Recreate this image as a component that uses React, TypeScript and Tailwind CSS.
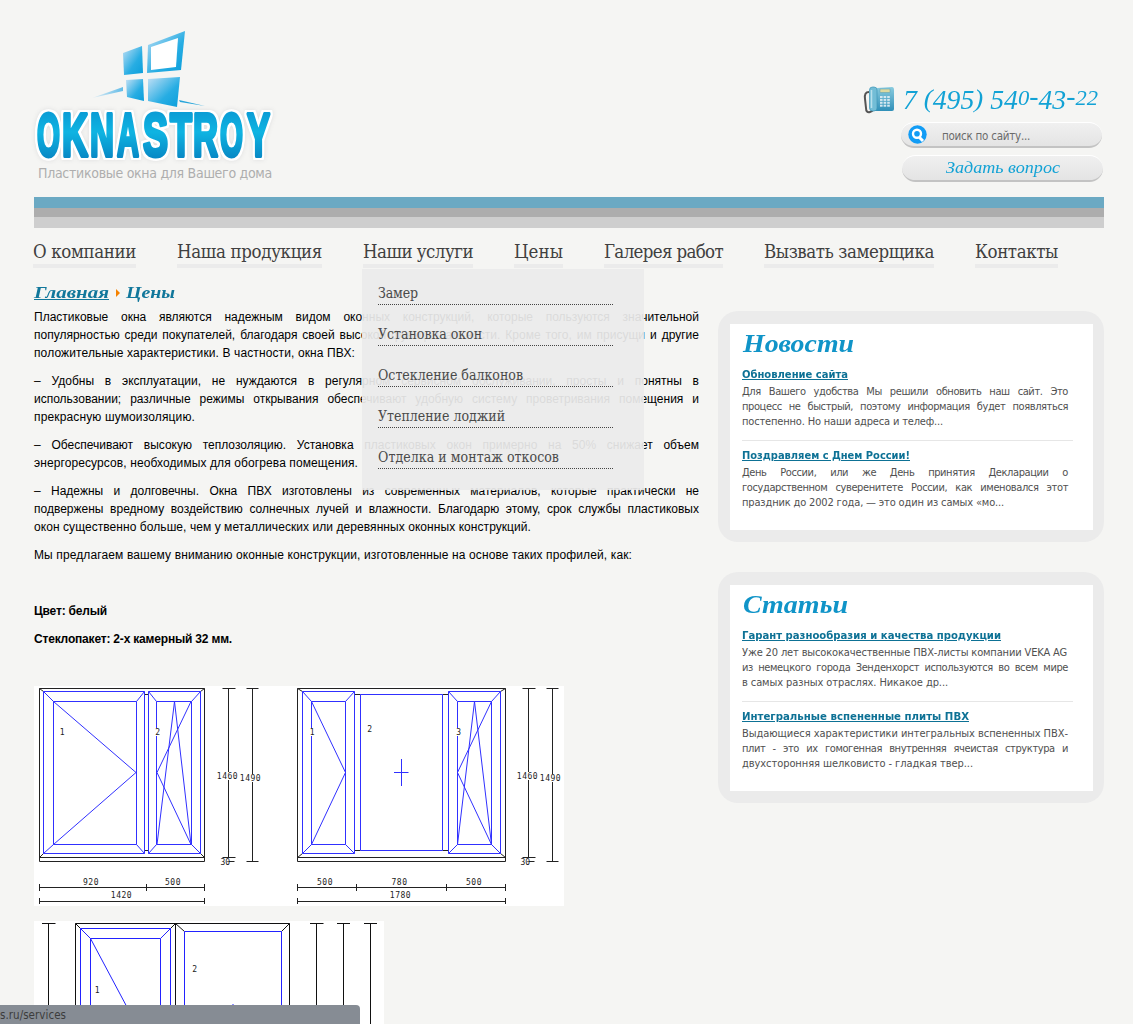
import React, { useLayoutEffect, useRef } from "react";

const SERIF = "font-['DejaVu_Serif_Condensed','DejaVu_Serif',serif]";
const TIMES = "font-['Liberation_Serif',serif]";
const TAHOMA = "font-['DejaVu_Sans_Condensed','DejaVu_Sans',sans-serif]";

/** One line of text whose letter spacing is tuned so that it spans `width` pixels. */
function Fit({ text, width, className = "" }: { text: string; width: number; className?: string }) {
  const ref = useRef<HTMLSpanElement>(null);
  useLayoutEffect(() => {
    const el = ref.current;
    if (!el) return;
    el.style.letterSpacing = "0px";
    const natural = el.getBoundingClientRect().width;
    el.style.letterSpacing = `${(width - natural) / text.length}px`;
  }, [text, width]);
  return (
    <span ref={ref} className={"inline-block whitespace-nowrap " + className}>
      {text}
    </span>
  );
}

/** One line of text whose letters are widened or narrowed to span `width` pixels. */
function Stretch({ children, width, className = "" }: { children: React.ReactNode; width: number; className?: string }) {
  const ref = useRef<HTMLSpanElement>(null);
  useLayoutEffect(() => {
    const el = ref.current;
    if (!el) return;
    el.style.transform = "none";
    el.style.transform = `scaleX(${width / el.getBoundingClientRect().width})`;
  }, [width]);
  return (
    <span className="inline-block" style={{ width }}>
      <span ref={ref} className={"inline-block origin-left whitespace-nowrap " + className}>
        {children}
      </span>
    </span>
  );
}

type Line = { t: string; w?: number };

function Lines({ lines }: { lines: Line[] }) {
  return (
    <>
      {lines.map((l) =>
        l.w ? (
          <span key={l.t} className="block">
            <Fit text={l.t} width={l.w} />
          </span>
        ) : (
          <span key={l.t} className="block whitespace-nowrap text-justify [text-align-last:justify]">
            {l.t}
          </span>
        ),
      )}
    </>
  );
}

const letters: [string, number, number][] = [
  ["O", 37, 23],
  ["K", 62, 26],
  ["N", 90, 24],
  ["A", 117, 22],
  ["S", 143, 25],
  ["T", 170, 22],
  ["R", 193, 25],
  ["O", 220, 23],
  ["Y", 247, 23],
];

function Logo() {
  return (
    <svg width="250" height="138" viewBox="30 26 250 138" className="block">
      <defs>
        <linearGradient id="pane" x1="0" y1="0" x2="1" y2="1">
          <stop offset="0" stopColor="#c3e0f5" />
          <stop offset="0.6" stopColor="#27ade3" />
          <stop offset="1" stopColor="#0a9edb" />
        </linearGradient>
        <linearGradient id="ray" x1="0" y1="0" x2="1" y2="0">
          <stop offset="0" stopColor="#e5eff5" />
          <stop offset="1" stopColor="#62bce8" />
        </linearGradient>
        <linearGradient id="word" gradientUnits="userSpaceOnUse" x1="0" y1="110" x2="0" y2="159">
          <stop offset="0" stopColor="#0a9ad4" />
          <stop offset="0.45" stopColor="#0fb4e2" />
          <stop offset="1" stopColor="#0787c4" />
        </linearGradient>
      </defs>
      <path d="M92 98 L123 87 L123 91 Z" fill="url(#ray)" />
      <path d="M179 100 L205 106 L180 102 Z" fill="#27a5da" />
      <path d="M123 53 L142 46 L143 73 L124 75 Z" fill="url(#pane)" />
      <path d="M126 80 L143 79 L144 101 L127 97 Z" fill="url(#pane)" />
      <path d="M148 79 L180 77 L177 107 L148 101 Z" fill="url(#pane)" />
      <path d="M148 45 L185 31 L181 70 L147 73 Z" fill="url(#pane)" />
      <path d="M151 47 L178 38 L176 67 L151 70 Z" fill="#fff" />
      <g
        className="[filter:drop-shadow(2px_0_0_white)_drop-shadow(-2px_0_0_white)_drop-shadow(0_2px_0_white)_drop-shadow(0_-2px_0_white)_drop-shadow(0_0_2px_#dddddd)]"
        fontFamily="Liberation Sans"
        fontWeight="700"
        fontSize="62"
        strokeLinejoin="round"
        fill="url(#word)"
        stroke="url(#word)"
        strokeWidth="4"
      >
        {letters.map(([c, x, w], i) => (
          <text key={i} x={x} y="156" textLength={w} lengthAdjust="spacingAndGlyphs">
            {c}
          </text>
        ))}
      </g>
    </svg>
  );
}

function Phone() {
  return (
    <svg width="32" height="29" viewBox="863 86 32 29">
      <defs>
        <linearGradient id="ph" x1="0" y1="0" x2="0" y2="1">
          <stop offset="0" stopColor="#8accdf" />
          <stop offset="1" stopColor="#2f8fb8" />
        </linearGradient>
      </defs>
      <path d="M869 92 Q864 92 865 99 L866 108 Q866 113 870 112 Q874 111 873 106" fill="none" stroke="#555" strokeWidth="2" />
      <path d="M877 88 L892 87 Q894 87 894 90 L894 109 Q894 111 892 111 L872 111 L872 103 Z" fill="url(#ph)" />
      <rect x="869.5" y="87" width="7.5" height="24" rx="3" fill="#73bdd6" stroke="#3d97b8" strokeWidth="0.7" />
      <path d="M871.5 90V108" stroke="#b8e0ec" strokeWidth="1.5" />
      <rect x="880" y="89" width="10" height="3.5" fill="#dcd9a0" stroke="#5a9cae" strokeWidth="0.5" />
      <g fill="#d4e8f0">
        {[0, 1, 2, 3].map((r) => [0, 1, 2].map((c) => <rect key={`${r}-${c}`} x={880 + c * 3.6} y={96 + r * 2.9} width="2.6" height="2" />))}
      </g>
    </svg>
  );
}

/** Old-style figures: 0 and 2 sit at x-height, the others hang below the baseline. */
function PhoneNumber() {
  return (
    <Stretch width={195}>
      {"7 (495) 540-43-22".split("").map((c, i) => (
        <span
          key={i}
          className={
            "02".includes(c)
              ? "text-[22px]"
              : "34579".includes(c)
                ? "align-[-4px] text-[27px]"
                : "()".includes(c)
                  ? "align-[-2px] text-[26px]"
                  : "text-[27px]"
          }
        >
          {c}
        </span>
      ))}
    </Stretch>
  );
}

const pill =
  "flex items-center rounded-full bg-gradient-to-b from-[#f0f0f0] to-[#e4e4e4] border-t border-t-white border-b-2 border-b-[#c3c3c3]";

const nav: [string, number][] = [
  ["О компании", 103],
  ["Наша продукция", 145],
  ["Наши услуги", 110],
  ["Цены", 49],
  ["Галерея работ", 119],
  ["Вызвать замерщика", 170],
  ["Контакты", 83],
];

const services: [string, number][] = [
  ["Замер", 40],
  ["Установка окон", 104],
  ["Остекление балконов", 145],
  ["Утепление лоджий", 127],
  ["Отделка и монтаж откосов", 181],
];

const paragraphs: Line[][] = [
  [
    { t: "Пластиковые окна являются надежным видом оконных конструкций, которые пользуются значительной" },
    { t: "популярностью среди покупателей, благодаря своей высокой функциональности. Кроме того, им присущи и другие" },
    { t: "положительные характеристики. В частности, окна ПВХ:", w: 321 },
  ],
  [
    { t: "– Удобны в эксплуатации, не нуждаются в регулярном сервисном обслуживании, просты и понятны в" },
    { t: "использовании; различные режимы открывания обеспечивают удобную систему проветривания помещения и" },
    { t: "прекрасную шумоизоляцию.", w: 161 },
  ],
  [
    { t: "– Обеспечивают высокую теплозоляцию. Установка пластиковых окон примерно на 50% снижает объем" },
    { t: "энергоресурсов, необходимых для обогрева помещения.", w: 324 },
  ],
  [
    { t: "– Надежны и долговечны. Окна ПВХ изготовлены из современных материалов, которые практически не" },
    { t: "подвержены вредному воздействию солнечных лучей и влажности. Благодарю этому, срок службы пластиковых" },
    { t: "окон существенно больше, чем у металлических или деревянных оконных конструкций.", w: 497 },
  ],
  [{ t: "Мы предлагаем вашему вниманию оконные конструкции, изготовленные на основе таких профилей, как:", w: 598 }],
];

type Item = { title: string; w: number; lines: Line[] };

const news: Item[] = [
  {
    title: "Обновление сайта",
    w: 106,
    lines: [
      { t: "Для Вашего удобства Мы решили обновить наш сайт. Это" },
      { t: "процесс не быстрый, поэтому информация будет появляться" },
      { t: "постепенно. Но наши адреса и телеф...", w: 201 },
    ],
  },
  {
    title: "Поздравляем с Днем России!",
    w: 168,
    lines: [
      { t: "День России, или же День принятия Декларации о" },
      { t: "государственном суверенитете России, как именовался этот" },
      { t: "праздник до 2002 года, — это один из самых «мо...", w: 262 },
    ],
  },
];

const articles: Item[] = [
  {
    title: "Гарант разнообразия и качества продукции",
    w: 259,
    lines: [
      { t: "Уже 20 лет высококачественные ПВХ-листы компании VEKA AG", w: 325 },
      { t: "из немецкого города Зенденхорст используются во всем мире" },
      { t: "в самых разных отраслях. Никакое др...", w: 206 },
    ],
  },
  {
    title: "Интегральные вспененные плиты ПВХ",
    w: 227,
    lines: [
      { t: "Выдающиеся характеристики интегральных вспененных ПВХ-", w: 326 },
      { t: "плит - это их гомогенная внутренняя ячеистая структура и" },
      { t: "двухсторонняя шелковисто - гладкая твер...", w: 231 },
    ],
  },
];

function Card({ title, w, items }: { title: string; w: number; items: Item[] }) {
  return (
    <section className="h-[231px] w-[386px] rounded-[20px] bg-[#ebebeb] pt-[13px] pr-[11px] pb-3 pl-3">
      <div className="h-full bg-white pl-3">
        <h2 className={"h-[42px] pt-[4px] pl-px text-[25px] leading-[32px] font-bold text-[#1094c8] italic " + TIMES}>
          <Stretch width={w}>{title}</Stretch>
        </h2>
        {items.map((it, i) => (
          <div key={it.title} className={TAHOMA + (i ? "" : " mb-[6px] h-[75px] w-[331px] border-b border-[#e6e6e6]")}>
            <a className="block h-[18px] text-[11px] leading-[17px] font-bold text-[#0d7195]">
              <Stretch width={it.w} className="underline">{it.title}</Stretch>
            </a>
            <p className="w-[326px] text-[11px] leading-[15px] tracking-[-0.4px] text-[#505050]">
              <Lines lines={it.lines} />
            </p>
          </div>
        ))}
      </div>
    </section>
  );
}

function Label({ x, y, children }: { x: number; y: number; children: string }) {
  const w = children.length * 5.3;
  return (
    <g>
      <rect x={x - w / 2 - 1} y={y - 4} width={w + 2} height="8" fill="#fff" />
      <text x={x} y={y + 3} textAnchor="middle" fontSize="8" fontFamily="DejaVu Sans Mono" letterSpacing="0.5" fill="#222">
        {children}
      </text>
    </g>
  );
}

/** Height dimensions drawn to the right of a window. */
function Heights({ x }: { x: number }) {
  return (
    <g>
      <path
        d={`M${x} 688V857M${x - 6} 688.5h13M${x - 6} 857.5h13M${x + 24} 688V861M${x + 18} 688.5h12M${x + 18} 861.5h12M${x} 861.5h6`}
        stroke="#222"
        fill="none"
      />
      <Label x={x - 1} y={776}>1460</Label>
      <Label x={x + 22} y={778}>1490</Label>
      <text x={x - 8} y={865} fontSize="8" fontFamily="DejaVu Sans Mono" fill="#222">30</text>
    </g>
  );
}

function sash(l: number, r: number, il: number, ir: number) {
  return `M${l} 691.5H${r}V853.5H${l}ZM${il} 701.5H${ir}V844.5H${il}ZM${l} 691.5L${il} 701.5M${r} 691.5L${ir} 701.5M${l} 853.5L${il} 844.5M${r} 853.5L${ir} 844.5`;
}

function DoubleDrawing() {
  return (
    <svg width="530" height="220" viewBox="34 686 530 220" className="block bg-white" fill="none">
      <g stroke="#222">
        <path d="M39.5 688.5H204.5V861.5H39.5ZM39.5 857.5H204.5M39.5 688.5l4 3M204.5 688.5l-4 3M39.5 857.5l4-4M204.5 857.5l-4-4M144.5 694.5h4M144.5 850.5h4" />
        <path d="M297.5 688.5H505.5V861.5H297.5ZM297.5 857.5H505.5M297.5 688.5l5 3M505.5 688.5l-5 3M297.5 857.5l5-4M505.5 857.5l-5-4M354.5 694.5h6M442.5 694.5h6M354.5 850.5h6M442.5 850.5h6" />
        <path d="M39 887.5H205M39 901.5H205M39.5 884v7M146.5 884v7M204.5 884v7M39.5 898v6M204.5 898v6" />
        <path d="M297 887.5H506M297 901.5H506M297.5 884v7M356.5 884v7M446.5 884v7M505.5 884v7M297.5 898v6M505.5 898v6" />
      </g>
      <g stroke="#3030ff">
        <path d={sash(43.5, 144.5, 53.5, 136.5)} />
        <path d="M53.5 701.5L136 772.5L53.5 844.5" />
        <path d={sash(148.5, 200.5, 156.5, 191.5)} />
        <path d="M191 701.5L157 772.5L191 844.5L174.5 701.5L157 844.5" />
        <path d={sash(302.5, 354.5, 311.5, 345.5)} />
        <path d="M311.5 701.5L345.5 772.5L311.5 844.5" />
        <path d="M360.5 694.5H442.5V850.5H360.5ZM354.5 694.5V850.5M394 772.5H408.5M401.5 759V786" />
        <path d={sash(448.5, 500.5, 457.5, 491.5)} />
        <path d="M491.5 701.5L457.5 772.5L491.5 844.5L474.5 701.5L457.5 844.5" />
      </g>
      <Heights x={228.5} />
      <Heights x={528.5} />
      <Label x={62.5} y={732}>1</Label>
      <Label x={158} y={732}>2</Label>
      <Label x={312.5} y={732}>1</Label>
      <Label x={370} y={729}>2</Label>
      <Label x={459} y={732}>3</Label>
      <Label x={91} y={882}>920</Label>
      <Label x={173} y={882}>500</Label>
      <Label x={121.5} y={895}>1420</Label>
      <Label x={325} y={882}>500</Label>
      <Label x={399.5} y={882}>780</Label>
      <Label x={474} y={882}>500</Label>
      <Label x={400.5} y={895}>1780</Label>
    </svg>
  );
}

function BalconyDrawing() {
  return (
    <svg width="350" height="103" viewBox="34 921 350 103" className="block bg-white" fill="none">
      <path
        stroke="#111"
        d="M48.5 923V1024M42 923.5h13.5M316.5 923V1024M310 923.5h13.5M343.5 923V1024M337 923.5h13M370.5 923V1024M364 923.5h13M75.5 1024V923.5H289.5V1024M175.5 923.5V1024M75.5 923.5l5 5M175.5 923.5l-5 5M175.5 923.5l9 8M289.5 923.5l-8 8"
      />
      <path
        stroke="#2222ff"
        d="M80.5 1024V928.5H170.5V1024M90.5 1024V938.5H160.5V1024M80.5 928.5l10 10M170.5 928.5l-10 10M90.5 938.5L136 1024M184.5 1024V931.5H281.5V1024M233 1004V1024"
      />
      <Label x={97.5} y={990}>1</Label>
      <Label x={195} y={969}>2</Label>
    </svg>
  );
}

export default function App() {
  return (
    <div className="relative h-[1024px] w-[1133px] overflow-hidden bg-[#f5f5f3] font-['Liberation_Sans',sans-serif]">
      <header className="flex h-[197px] justify-between pt-[26px] pr-[30px] pl-[30px]">
        <div className="w-[250px]">
          <Logo />
          <div className={"pl-2 text-[14px] leading-[18px] text-[#aeaeae] " + TAHOMA}>
            <Fit text="Пластиковые окна для Вашего дома" width={234} />
          </div>
        </div>
        <div className="flex flex-col items-end pt-[58px]">
          <div className="flex h-[38px] w-[240px] items-start gap-2 pt-[2px]">
            <Phone />
            <span className={"-mt-[2px] text-[27px] leading-[24px] text-[#12a2d5] italic " + TIMES}>
              <PhoneNumber />
            </span>
          </div>
          <div className={pill + " mr-[1px] h-[26px] w-[201px] gap-[15px] pl-[7px]"}>
            <svg width="19" height="19" viewBox="0 0 19 19">
              <circle cx="9.5" cy="9.5" r="9.2" fill="#129cf5" />
              <path d="M11.5 12.5L15 16" stroke="#fff" strokeWidth="3" />
              <circle cx="9" cy="8.8" r="4" fill="none" stroke="#fff" strokeWidth="2.4" />
            </svg>
            <span className={"pt-[3px] text-[11.5px] leading-4 text-[#6b6b6b] " + TAHOMA}>
              <Fit text="поиск по сайту..." width={88} />
            </span>
          </div>
          <div className={pill + " mt-[7px] h-[27px] w-[201px] justify-center text-[17px] text-[#12a2d5] italic " + TIMES}>
            <Stretch width={114}>Задать вопрос</Stretch>
          </div>
        </div>
      </header>

      <div className="ml-[34px] w-[1070px]">
        <div className="h-[11px] bg-[#6ba9c3]" />
        <div className="h-[9px] bg-[#adadad]" />
        <div className="h-[11px] bg-[#cecece]" />
      </div>

      <nav className={"ml-[33px] flex h-[41px] gap-[41px] pt-2 text-[18.5px] leading-[31px] text-[#404040] " + SERIF}>
        {nav.map(([t, w]) => (
          <div key={t} className="relative h-8 border-b-4 border-[#ebebeb]">
            <div className="h-7">
              <Fit text={t} width={w} />
            </div>
            {t === "Наши услуги" && (
              <ul className="absolute top-[33px] -left-px z-10 h-[221px] w-[282px] bg-[#ebebeb]/93 pt-[15px] pl-4 text-[14px] leading-[18px] text-[#4a4a4a]">
                {services.map(([s, sw]) => (
                  <li key={s} className="mb-[20px] h-[21px] w-[235px] border-b border-dotted border-[#444]">
                    <Fit text={s} width={sw} />
                  </li>
                ))}
              </ul>
            )}
          </div>
        ))}
      </nav>

      <div className="flex pl-[34px]">
        <main className="w-[665px]">
          <div className={"flex h-[39px] items-center pt-[8px] text-[17px] font-bold text-[#11779b] italic " + TIMES}>
            <Stretch width={75} className="underline">Главная</Stretch>
            <svg width="4" height="8" viewBox="0 0 4 8" className="mr-[6px] ml-[7px]">
              <path d="M0 0L4 4L0 8Z" fill="#f58200" />
            </svg>
            <Stretch width={49}>Цены</Stretch>
          </div>
          <div className="text-[12px] leading-[18px] text-black">
            {paragraphs.map((p) => (
              <p key={p[0].t} className="mb-[10px]">
                <Lines lines={p} />
              </p>
            ))}
            <p className="mt-[38px] mb-[10px] font-bold">
              <Fit text="Цвет: белый" width={73} />
            </p>
            <p className="mb-[38px] font-bold">
              <Fit text="Стеклопакет: 2-х камерный 32 мм." width={198} />
            </p>
          </div>
          <DoubleDrawing />
          <div className="h-[15px]" />
          <BalconyDrawing />
        </main>
        <aside className="ml-[19px] flex flex-col gap-[30px] pt-[42px]">
          <Card title="Новости" w={111} items={news} />
          <Card title="Статьи" w={105} items={articles} />
        </aside>
      </div>

      <div className={"absolute bottom-0 left-0 z-20 h-[19px] w-[360px] rounded-tr bg-[#868c94] text-[11.5px] leading-[21px] text-[#3c3c3c] " + TAHOMA}>
        <Fit text="s.ru/services" width={66} />
      </div>
    </div>
  );
}
